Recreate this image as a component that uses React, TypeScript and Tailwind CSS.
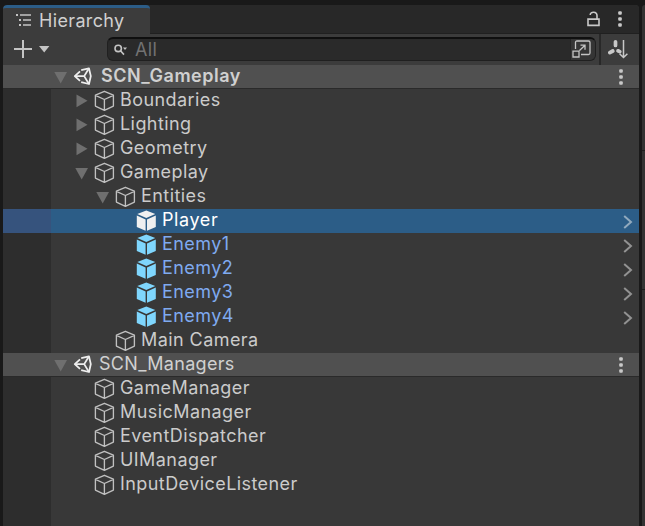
import React from "react";

type Kind = "object" | "selected" | "prefab";
type Item = { name: string; depth: 1 | 2 | 3; arrow?: "right" | "down"; kind?: Kind };

const gameplay: Item[] = [
  { name: "Boundaries", depth: 1, arrow: "right" },
  { name: "Lighting", depth: 1, arrow: "right" },
  { name: "Geometry", depth: 1, arrow: "right" },
  { name: "Gameplay", depth: 1, arrow: "down" },
  { name: "Entities", depth: 2, arrow: "down" },
  { name: "Player", depth: 3, kind: "selected" },
  { name: "Enemy1", depth: 3, kind: "prefab" },
  { name: "Enemy2", depth: 3, kind: "prefab" },
  { name: "Enemy3", depth: 3, kind: "prefab" },
  { name: "Enemy4", depth: 3, kind: "prefab" },
  { name: "Main Camera", depth: 2 },
];

const managers: Item[] = [
  { name: "GameManager", depth: 1 },
  { name: "MusicManager", depth: 1 },
  { name: "EventDispatcher", depth: 1 },
  { name: "UIManager", depth: 1 },
  { name: "InputDeviceListener", depth: 1 },
];

const indent = { 1: "pl-[24px]", 2: "pl-[45px]", 3: "pl-[66px]" };

function Arrow({ dir }: { dir?: "right" | "down" }) {
  return (
    <svg className="h-6 w-[14px] shrink-0" viewBox="0 0 14 24" fill="#6f6f6f">
      {dir === "right" && <path d="M1.5 5.5 12.5 11.8 1.5 18.2Z" />}
      {dir === "down" && <path d="M.3 7H13L6.7 18.5Z" />}
    </svg>
  );
}

function Cube({ kind = "object" }: { kind?: Kind }) {
  if (kind === "object") {
    return (
      <svg className="h-6 w-[21px] shrink-0" viewBox="0 0 21 24" fill="none" stroke="#c0c0c0" strokeWidth="1.35" strokeLinejoin="round">
        <path d="M10.4 2.3 19.4 6.1V17.1L10.4 21.3 1.4 17.1V6.1ZM1.4 6.3 10.4 10.5 19.4 6.3M10.4 10.5V21.3" />
      </svg>
    );
  }
  return (
    <svg className={"h-6 w-[21px] shrink-0 " + (kind === "prefab" ? "fill-[#7fd6fd]" : "fill-[#f0f0f0]")} viewBox="0 0 21 24">
      <path d="M10.3 1.5 19.3 5.1 10.3 9.1 1.3 5.1ZM.8 6.5 9.6 10.4V21.8L.8 18ZM19.8 6.5 11 10.4V21.8L19.8 18Z" />
    </svg>
  );
}

function Dots() {
  return (
    <svg className="h-[18px] w-1 shrink-0" viewBox="0 0 4 18" fill="#c8c8c8">
      <rect x=".2" y="1.2" width="3.6" height="3.6" rx="1" />
      <rect x=".2" y="7.2" width="3.6" height="3.6" rx="1" />
      <rect x=".2" y="13.2" width="3.6" height="3.6" rx="1" />
    </svg>
  );
}

function Scene({ name, active }: { name: string; active?: boolean }) {
  return (
    <div className="flex h-6 items-center border-b border-[#2a2a2a] bg-[#505050] pr-4 pl-[51px]">
      <Arrow dir="down" />
      <svg className="ml-[5px] h-[19px] w-[20px] shrink-0" viewBox="0 0 20 19" fill="none" stroke="#eeeeee" strokeWidth="1.8" strokeLinejoin="round">
        <path d="M8.2 3.1 16 1.4 17.8 9.1 16 17 8.2 15.1M7 4.4 1.8 9.1 7 13.9" />
        <path d="M2 9.1H11.2L15.7 1.8M11.2 9.1 15.7 16.6" />
      </svg>
      <span className={"flex-1 pb-[2px] text-[18px] leading-[22px] text-[#d0d0d0] " + (active ? "pl-[8px] font-semibold tracking-[0.5px]" : "pl-[6px] tracking-[0.3px]")}>
        {name}
      </span>
      <Dots />
    </div>
  );
}

function Row({ item }: { item: Item }) {
  const { name, depth, arrow, kind } = item;
  const selected = kind === "selected";
  const color = selected ? "text-white" : kind === "prefab" ? "text-[#7faaf0]" : "text-[#cbcbcb]";
  return (
    <div className="flex h-6">
      <div className={"w-12 shrink-0 " + (selected ? "bg-[#36537d]" : "bg-[#2d2d2d]")} />
      <div className={"flex flex-1 items-center pr-[6px] " + indent[depth] + " " + (selected ? "bg-[#2c5d87]" : "")}>
        <Arrow dir={arrow} />
        <div className="ml-[5px] flex">
          <Cube kind={kind} />
        </div>
        <span className={"flex-1 pb-[2px] pl-[5px] text-[18px] leading-[22px] whitespace-nowrap " + (selected ? "tracking-[0.6px] " : "tracking-[0.43px] ") + color}>{name}</span>
        {depth === 3 && (
          <svg className="h-6 w-[10px]" viewBox="0 0 10 24" fill="none" stroke={selected ? "#91a9bd" : "#929292"} strokeWidth="2">
            <path d="M1.2 7 8 13 1.2 19" />
          </svg>
        )}
      </div>
    </div>
  );
}

export default function App() {
  return (
    <div className="flex h-[526px] w-[645px] overflow-hidden bg-[#191919] pt-[5px] pl-[3px] font-['Inter',sans-serif]">
      <main className="flex w-[636px] flex-col overflow-hidden rounded-t-[4px] bg-[#383838]">
        <header className="flex h-[29px] shrink-0 bg-[#282828]">
          <div className="flex w-[147px] items-center rounded-t-[4px] border-t-[3px] border-[#2c5d87] bg-[#3c3c3c] pl-[13px]">
            <svg className="mb-[2px] h-[14px] w-4" viewBox="0 0 16 14" fill="#c4c4c4">
              <path d="M0 1h2v2H0ZM4 1.3h11v1.4H4ZM3 6h2v2H3ZM7 6.3h8v1.4H7ZM3 11h2v2H3ZM7 11.3h8v1.4H7Z" />
            </svg>
            <span className="pb-px pl-[7px] text-[18px] leading-[22px] tracking-[0.35px] text-[#d0d0d0]">Hierarchy</span>
          </div>
          <div className="flex flex-1 items-center justify-end gap-[18px] border-b border-[#202020] pr-[17px]">
            <svg className="h-4 w-[13px]" viewBox="0 0 13 16" fill="none" stroke="#c8c8c8" strokeWidth="1.6">
              <path d="M1 8.1H12V14.4H1ZM10 8V4.6C10 .3 3.2.2 3.2 3.9" />
            </svg>
            <Dots />
          </div>
        </header>
        <div className="flex h-[31px] shrink-0 items-center bg-[#3c3c3c]">
          <svg className="mb-[2px] ml-[11px] h-[18px] w-[37px]" viewBox="0 0 37 18">
            <path d="M9 0V18M0 9H18" stroke="#c4c4c4" strokeWidth="2" />
            <path d="M25 6H35.4L30.2 12.4Z" fill="#c4c4c4" />
          </svg>
          <div className="mb-px ml-[56px] flex h-[24px] w-[489px] items-center overflow-hidden rounded-[6px] border border-t-2 border-[#202020] border-t-[#0f0f0f] bg-[#2a2a2a]">
            <svg className="ml-[6px] h-3 w-[14px]" viewBox="0 0 14 12" fill="none" stroke="#c4c4c4" strokeWidth="1.6">
              <circle cx="4.2" cy="4.4" r="3.2" />
              <path d="M6.5 6.8 10 10.6" />
              <path d="M9 3.5H13L11 6Z" fill="#c4c4c4" stroke="none" />
            </svg>
            <span className="flex-1 pl-[7px] text-[18px] leading-[20px] tracking-[0.3px] text-[#727272]">All</span>
            <div className="-mt-[2px] flex h-[24px] w-[25px] items-center border-l border-[#252525] bg-[#353535] pl-px">
              <svg className="mt-px h-[18px] w-[19px]" viewBox="0 0 19 18" fill="none" stroke="#c4c4c4" strokeWidth="1.3">
                <path d="M3.5 9V2.5Q3.5 1 5 1H16.5Q18 1 18 2.5V13Q18 14.5 16.5 14.5H9M1 11.2H7V17H1ZM7.5 10.5 13 5.2M8.5 5.2H13V9.8" />
              </svg>
            </div>
          </div>
          <div className="ml-[3px] h-[31px] w-[2px] bg-[#282828]" />
          <svg className="mb-[2px] ml-[6px] h-5 w-[22px]" viewBox="0 0 22 20" fill="none" stroke="#c8c8c8" strokeWidth="3.7" strokeLinecap="round">
            <path d="M8.5 2.8V6.5M5.8 12 2.8 13.6" />
            <path d="M11 11.8 12.8 12.6" />
            <path d="M16.5 1V18.4M12.6 14.7 16.5 18.5 20.4 14.7" strokeWidth="1.5" strokeLinecap="butt" />
          </svg>
        </div>
        <Scene name="SCN_Gameplay" active />
        {gameplay.map((item) => <Row key={item.name} item={item} />)}
        <Scene name="SCN_Managers" />
        {managers.map((item) => <Row key={item.name} item={item} />)}
        <div className="w-12 flex-1 bg-[#2d2d2d]" />
      </main>
      <aside className="ml-[3px] flex flex-1 flex-col rounded-tl-[4px] bg-[#333333]">
        <div className="h-[145px]" />
        <div className="h-px bg-[#202020]" />
        <div className="h-[138px]" />
        <div className="h-px bg-[#1c1c1c]" />
      </aside>
    </div>
  );
}
